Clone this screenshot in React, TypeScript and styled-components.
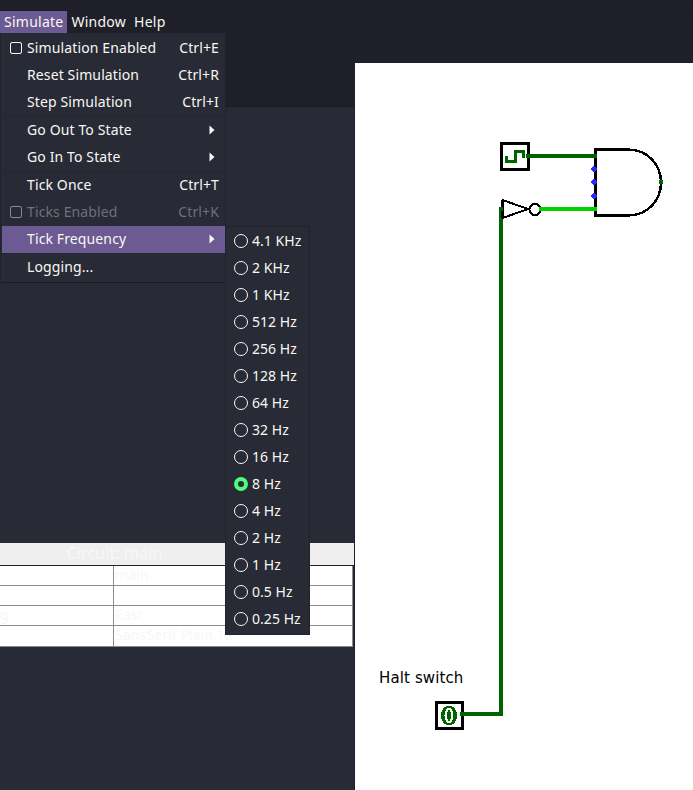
import styled, { createGlobalStyle } from "styled-components";

const GlobalStyle = createGlobalStyle`
  html, body {
    margin: 0;
    padding: 0;
    background: #1e1f29;
  }
  #root {
    height: 790px;
    overflow: hidden;
  }
`;

const frequencies = [
  "4.1 KHz", "2 KHz", "1 KHz", "512 Hz", "256 Hz", "128 Hz", "64 Hz", "32 Hz",
  "16 Hz", "8 Hz", "4 Hz", "2 Hz", "1 Hz", "0.5 Hz", "0.25 Hz",
];

// the name column is scrolled in the reference, only the last letter of "Facing" shows
const attributes = [
  { name: "", value: "main" },
  { name: "", value: "" },
  { name: "g", value: "East" },
  { name: "", value: "SansSerif Plain 12" },
];

function Arrow() {
  return (
    <svg width="6" height="10" viewBox="0 0 6 10">
      <path d="M0.5 0.5 L5.5 5 L0.5 9.5 Z" fill="#f8f8f2" />
    </svg>
  );
}

function Circuit() {
  return (
    <svg width="338" height="727" viewBox="355 63 338 727" shapeRendering="crispEdges">
      {/* wires */}
      <path d="M528 156 H595" stroke="#006400" strokeWidth="4" fill="none" />
      <path d="M541 209 H595" stroke="#00d200" strokeWidth="4" fill="none" />
      <path d="M501 209 V714 H462" stroke="#006400" strokeWidth="4" fill="none" />

      {/* clock */}
      <rect x="501.5" y="143.5" width="27" height="26" fill="#fff" stroke="#000" strokeWidth="3" />
      <path d="M506.5 156 V161.5 H515 V151.5 H523 V158" stroke="#006400" strokeWidth="3" fill="none" />
      <circle cx="528" cy="156" r="2.5" fill="#006400" />

      {/* not gate */}
      <path d="M502.5 200 L528 209 L502.5 218 Z" fill="none" stroke="#000" strokeWidth="2" />
      <path d="M502.5 200 V218" stroke="#000" strokeWidth="3" fill="none" />
      <circle cx="535" cy="209.5" r="5.5" fill="none" stroke="#000" strokeWidth="2" />
      <circle cx="501" cy="209" r="2.5" fill="#006400" />
      <circle cx="541" cy="209" r="2.5" fill="#00d200" />

      {/* and gate */}
      <path
        d="M595 149.5 H628 C648 149.5 661 165 661 182.5 C661 200 648 215.5 628 215.5 H595"
        fill="none"
        stroke="#000"
        strokeWidth="2.4"
      />
      <path d="M595.5 148 V217" stroke="#000" strokeWidth="3" fill="none" />
      <circle cx="595" cy="156" r="2.5" fill="#006400" />
      <circle cx="595" cy="209" r="2.5" fill="#00d200" />
      <circle cx="594" cy="169" r="2.8" fill="#2a2aff" />
      <circle cx="594" cy="182" r="2.8" fill="#2a2aff" />
      <circle cx="594" cy="196" r="2.8" fill="#2a2aff" />
      <circle cx="661" cy="182" r="2.5" fill="#006400" />

      {/* halt switch */}
      <HaltLabel x="379" y="683">
        Halt switch
      </HaltLabel>
      <rect x="436.5" y="702.5" width="26" height="26" fill="#fff" stroke="#000" strokeWidth="3" />
      <ellipse cx="449" cy="715.5" rx="8" ry="10" fill="#006400" />
      <ellipse cx="449" cy="715.5" rx="4.5" ry="7.5" fill="#fff" />
      <ellipse cx="449" cy="715.5" rx="2" ry="6" fill="#006400" />
      <circle cx="462" cy="714" r="2.5" fill="#006400" />
    </svg>
  );
}

export default function App() {
  return (
    <>
      <GlobalStyle />
      <Window>
        <TitleStrip />
        <MenuBar>
          <MenuTitle $open>
            Simulate
            <Dropdown>
              <MenuRow>
                <IconSlot>
                  <CheckBox />
                </IconSlot>
                <RowLabel>Simulation Enabled</RowLabel>
                <Shortcut>Ctrl+E</Shortcut>
              </MenuRow>
              <MenuRow>
                <IconSlot />
                <RowLabel>Reset Simulation</RowLabel>
                <Shortcut>Ctrl+R</Shortcut>
              </MenuRow>
              <MenuRow>
                <IconSlot />
                <RowLabel>Step Simulation</RowLabel>
                <Shortcut>Ctrl+I</Shortcut>
              </MenuRow>
              <Separator />
              <MenuRow>
                <IconSlot />
                <RowLabel>Go Out To State</RowLabel>
                <ArrowSlot>
                  <Arrow />
                </ArrowSlot>
              </MenuRow>
              <MenuRow>
                <IconSlot />
                <RowLabel>Go In To State</RowLabel>
                <ArrowSlot>
                  <Arrow />
                </ArrowSlot>
              </MenuRow>
              <Separator />
              <MenuRow>
                <IconSlot />
                <RowLabel>Tick Once</RowLabel>
                <Shortcut>Ctrl+T</Shortcut>
              </MenuRow>
              <MenuRow $disabled>
                <IconSlot>
                  <CheckBox $disabled />
                </IconSlot>
                <RowLabel>Ticks Enabled</RowLabel>
                <Shortcut>Ctrl+K</Shortcut>
              </MenuRow>
              <MenuRow $active>
                <IconSlot />
                <RowLabel>Tick Frequency</RowLabel>
                <ArrowSlot>
                  <Arrow />
                </ArrowSlot>
              </MenuRow>
              <Separator />
              <MenuRow>
                <IconSlot />
                <RowLabel>Logging...</RowLabel>
              </MenuRow>
            </Dropdown>
            <Submenu>
              {frequencies.map((freq) => (
                <SubRow key={freq}>
                  <Radio $checked={freq === "8 Hz"} />
                  {freq}
                </SubRow>
              ))}
            </Submenu>
          </MenuTitle>
          <MenuTitle>Window</MenuTitle>
          <MenuTitle>Help</MenuTitle>
        </MenuBar>
        <Body>
          <LeftColumn>
            <Toolbar />
            <Panel>
              <AttrHeader>Circuit: main</AttrHeader>
              <AttrTable>
                {attributes.map((attr) => (
                  <AttrRow key={attr.value || "blank"}>
                    <AttrName>{attr.name}</AttrName>
                    <AttrValue>{attr.value}</AttrValue>
                  </AttrRow>
                ))}
              </AttrTable>
            </Panel>
          </LeftColumn>
          <Canvas>
            <Circuit />
          </Canvas>
        </Body>
      </Window>
    </>
  );
}

const HaltLabel = styled.text`
  font-family: "DejaVu Sans", sans-serif;
  font-size: 15px;
  fill: #000;
`;

const Window = styled.div`
  width: 693px;
  height: 790px;
  display: flex;
  flex-direction: column;
  background: #1e1f29;
  color: #f8f8f2;
  font-family: "Noto Sans", sans-serif;
  font-size: 14px;
  letter-spacing: 0.12px;
  overflow: hidden;
`;

const TitleStrip = styled.div`
  height: 11px;
  flex: none;
  border-bottom: 1px solid #1b1c25;
  box-sizing: border-box;
`;

const MenuBar = styled.div`
  height: 22px;
  flex: none;
  display: flex;
  position: relative;
  z-index: 10;
  letter-spacing: 0.25px;
`;

const MenuTitle = styled.div<{ $open?: boolean }>`
  padding: 0 4px;
  line-height: 21px;
  height: 22px;
  background: ${(p) => (p.$open ? "#6c5a92" : "transparent")};
`;

const Dropdown = styled.div`
  position: absolute;
  top: 22px;
  left: 0;
  width: 226px;
  height: 250px;
  box-sizing: border-box;
  padding: 2px 0 0 1px;
  background: #282a36;
  border-bottom: 1px solid #1b1c25;
  border-right: 1px solid #21222c;
  border-left: 1px solid #21222c;
  letter-spacing: 0.12px;
`;

const MenuRow = styled.div<{ $disabled?: boolean; $active?: boolean }>`
  height: 27px;
  box-sizing: border-box;
  padding-bottom: 2px;
  display: flex;
  align-items: center;
  background: ${(p) => (p.$active ? "#6c5a92" : "transparent")};
  color: ${(p) => (p.$disabled ? "#6f7078" : "#f8f8f2")};
  line-height: 25px;
`;

const IconSlot = styled.span`
  width: 25px;
  flex: none;
  display: flex;
  padding-left: 8px;
  box-sizing: border-box;
`;

const CheckBox = styled.span<{ $disabled?: boolean }>`
  width: 12px;
  height: 12px;
  box-sizing: border-box;
  border: 1px solid ${(p) => (p.$disabled ? "#8a8b92" : "#f8f8f2")};
  border-radius: 2px;
`;

const RowLabel = styled.span`
  flex: 1;
`;

const Shortcut = styled.span`
  padding-right: 6px;
`;

const ArrowSlot = styled.span`
  display: flex;
  padding-right: 10px;
`;

const Separator = styled.div`
  height: 1px;
  background: #25272f;
`;

const Submenu = styled.div`
  position: absolute;
  top: 215px;
  left: 225px;
  width: 85px;
  height: 409px;
  box-sizing: border-box;
  background: #282a36;
  border: 1px solid #21222c;
  letter-spacing: 0.05px;
`;

const SubRow = styled.div`
  height: 27px;
  display: flex;
  align-items: center;
  padding-left: 8px;
  gap: 4px;
`;

const Radio = styled.span<{ $checked?: boolean }>`
  width: 14px;
  height: 14px;
  box-sizing: border-box;
  border-radius: 50%;
  flex: none;
  border: ${(p) => (p.$checked ? "4px solid #50fa7b" : "1px solid #f8f8f2")};
  background: ${(p) => (p.$checked ? "#282a36" : "transparent")};
`;

const Body = styled.div`
  flex: 1;
  display: flex;
  min-height: 0;
  padding-top: 30px;
`;

const LeftColumn = styled.div`
  width: 355px;
  flex: none;
  margin-top: -30px;
  display: flex;
  flex-direction: column;
  overflow: hidden;
`;

const Toolbar = styled.div`
  height: 74px;
  flex: none;
  border-bottom: 1px solid #191a21;
  box-sizing: border-box;
`;

const Panel = styled.div`
  flex: 1;
  background: #282a36;
  padding-top: 436px;
  border-right: 1px solid #1e1f29;
`;

const AttrHeader = styled.div`
  height: 22px;
  background: #efefef;
  border-bottom: 1px solid #21222c;
  color: #f8f8f2;
  font-size: 16px;
  line-height: 21px;
  text-align: center;
  padding-right: 125px;
`;

const AttrTable = styled.div`
  margin-right: 1px;
  background: #fff;
  border-right: 1px solid #8c8c8c;
  border-bottom: 1px solid #8c8c8c;
`;

const AttrRow = styled.div`
  display: grid;
  grid-template-columns: 114px 1fr;
  height: 20px;
  box-sizing: border-box;
  border-bottom: 1px solid #8c8c8c;
  line-height: 18px;
  color: #f8f8f2;
  &:last-child {
    border-bottom: none;
  }
`;

const AttrName = styled.div`
  border-right: 1px solid #8c8c8c;
`;

const AttrValue = styled.div`
  padding-left: 1px;
  white-space: nowrap;
`;

const Canvas = styled.div`
  flex: 1;
  background: #fff;
  display: flex;
`;
